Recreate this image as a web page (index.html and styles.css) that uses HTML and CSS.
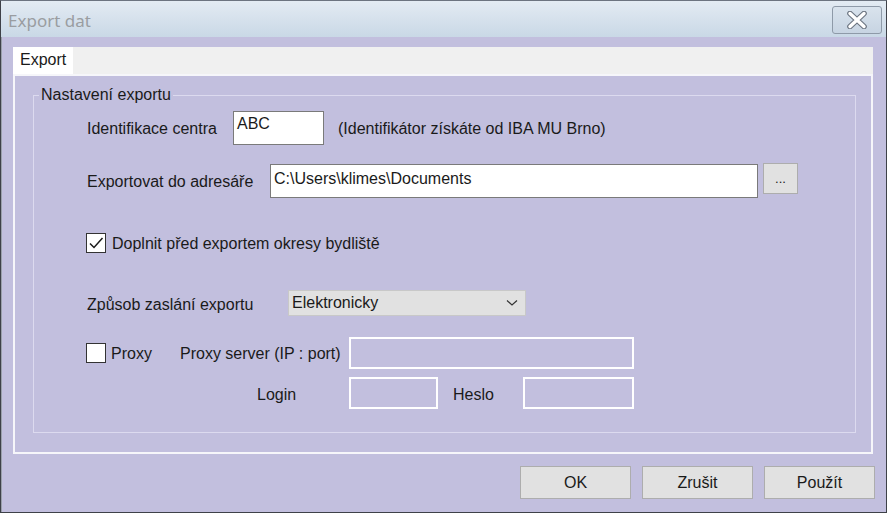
FILE: index.html
```html
<!DOCTYPE html>
<html lang="cs">
<head>
<meta charset="utf-8">
<title>Export dat</title>
<link rel="stylesheet" href="styles.css">
</head>
<body>
<div class="window">
  <div class="titlebar">
    <span class="title">Export dat</span>
    <button class="close" type="button" aria-label="Zavřít">
      <svg width="20" height="18" viewBox="0 0 20 18">
        <path d="M3 2.5 L17 15.5 M17 2.5 L3 15.5" stroke="#6b7480" stroke-width="5.6" stroke-linecap="round" fill="none"/>
        <path d="M3 2.5 L17 15.5 M17 2.5 L3 15.5" stroke="#ffffff" stroke-width="3.4" stroke-linecap="round" fill="none"/>
      </svg>
    </button>
  </div>
  <div class="client">
    <div class="tabstrip">
      <div class="tab">Export</div>
    </div>
    <div class="panel">
      <fieldset class="group">
        <legend>Nastavení exportu</legend>
        <div class="rows">
          <div class="row r1">
            <span class="lbl txt w146">Identifikace centra</span>
            <div class="field f-id">ABC</div>
            <span class="note txt">(Identifikátor získáte od IBA MU Brno)</span>
          </div>
          <div class="row r2">
            <span class="lbl txt w183">Exportovat do adresáře</span>
            <div class="field f-path">C:\Users\klimes\Documents</div>
            <button class="btn dots" type="button">...</button>
          </div>
          <div class="row r3">
            <span class="cb checked">
              <svg width="18" height="18" viewBox="0 0 18 18"><path d="M3 9.5 L7 13.5 L15.5 4" stroke="#1a1a1a" stroke-width="1.5" fill="none"/></svg>
            </span>
            <span class="cbtext txt">Doplnit před exportem okresy bydliště</span>
          </div>
          <div class="row r4">
            <span class="lbl txt2 w201">Způsob zaslání exportu</span>
            <div class="select">
              <span>Elektronicky</span>
              <svg width="12" height="8" viewBox="0 0 12 8"><path d="M1 1.5 L6 6 L11 1.5" stroke="#333" stroke-width="1.2" fill="none"/></svg>
            </div>
          </div>
          <div class="row r5">
            <span class="cbwrap">
              <span class="cb"></span>
              <span class="cbtext2 txt">Proxy</span>
            </span>
            <span class="lbl txt w169">Proxy server (IP : port)</span>
            <div class="dfield w285"></div>
          </div>
          <div class="row r6">
            <span class="lbl txt2 login">Login</span>
            <div class="dfield w89"></div>
            <span class="lbl txt2 heslo">Heslo</span>
            <div class="dfield w111"></div>
          </div>
        </div>
      </fieldset>
    </div>
    <div class="buttons">
      <button class="btn big" type="button">OK</button>
      <button class="btn big" type="button">Zrušit</button>
      <button class="btn big" type="button">Použít</button>
    </div>
  </div>
</div>
</body>
</html>
```

FILE: styles.css
```css
html, body {
  margin: 0;
  padding: 0;
  background: #c2bfde;
}
body {
  font-family: "Liberation Sans", Arial, sans-serif;
  font-size: 16px;
  color: #1a1a1a;
}
.window {
  width: 887px;
  height: 513px;
  box-sizing: border-box;
  border: 1px solid #3e4148;
  border-top-color: #6c7480;
  background: #c2bfde;
  display: flex;
  flex-direction: column;
  box-shadow: inset 1px 0 0 #9aa0ab;
}
.titlebar {
  height: 36px;
  flex: none;
  background: linear-gradient(#e3ebf3, #c9d8e6);
  display: flex;
  align-items: center;
  justify-content: space-between;
  padding: 0 4px 0 7px;
}
.title {
  font-family: "Noto Sans", sans-serif;
  font-size: 17px;
  color: #9a9da1;
  margin-top: 2px;
}
.close {
  width: 50px;
  height: 28px;
  margin-top: 1px;
  border: 1px solid #8e9aa8;
  border-radius: 3px;
  background: linear-gradient(#d9e3ed, #c7d4e2);
  padding: 0;
  display: flex;
  align-items: center;
  justify-content: center;
}
.client {
  flex: 1;
  display: flex;
  flex-direction: column;
  padding: 10px 12px 0 12px;
}
.tabstrip {
  height: 27px;
  width: 860px;
  background: #f0f0f0;
  display: flex;
}
.tab {
  width: 60px;
  height: 27px;
  box-sizing: border-box;
  background: #ffffff;
  padding: 4px 0 0 7px;
  line-height: 18px;
}
.panel {
  width: 860px;
  height: 380px;
  box-sizing: border-box;
  border: 2px solid #f6f6fa;
  padding: 10px 15px 0 18px;
}
.group {
  margin: 0;
  padding: 0;
  height: 347px;
  box-sizing: border-box;
  border: 1px solid #dcdaef;
  min-width: 0;
}
.group legend {
  margin-left: 5px;
  padding: 0 2px;
  line-height: 18px;
}
.rows {
  padding-left: 53px;
}
.row {
  display: flex;
  align-items: center;
}
.txt { padding-top: 2px; }
.txt2 { padding-top: 4px; }
.r1 { margin-top: 7px; height: 34px; }
.r2 { margin-top: 18px; height: 35px; align-items: flex-start; }
.r2 .lbl { align-self: center; }
.r3 { margin-top: 35px; height: 20px; }
.r4 { margin-top: 37px; height: 26px; }
.r5 { margin-top: 21px; height: 32px; }
.r6 { margin-top: 8px; height: 32px; }
.lbl { flex: none; }
.w146 { width: 146px; }
.w183 { width: 183px; }
.w201 { width: 201px; }
.w169 { width: 169px; }
.field {
  background: #ffffff;
  border: 1px solid #7a7a7a;
  box-sizing: border-box;
  height: 34px;
  padding: 3px 3px;
  line-height: 18px;
}
.f-id { width: 91px; }
.f-path { width: 488px; margin-top: 1px; padding-top: 5px; }
.note { margin-left: 14px; }
.btn {
  font-family: "Liberation Sans", Arial, sans-serif;
  font-size: 16px;
  color: #1a1a1a;
  background: #e1e1e1;
  border: 1px solid #adadad;
  padding: 0;
}
.dots {
  width: 35px;
  height: 31px;
  margin-left: 5px;
  font-size: 13px;
  line-height: 10px;
}
.cb {
  width: 20px;
  height: 20px;
  box-sizing: border-box;
  border: 1px solid #333333;
  background: #ffffff;
  margin-left: -1px;
  display: flex;
  align-items: center;
  justify-content: center;
  flex: none;
}
.cbtext { margin-left: 6px; }
.cbwrap {
  width: 93px;
  display: flex;
  align-items: center;
  flex: none;
}
.cbtext2 { margin-left: 5px; }
.select {
  width: 238px;
  height: 26px;
  box-sizing: border-box;
  background: #e1e1e1;
  border: 1px solid #c8c8c8;
  display: flex;
  align-items: center;
  justify-content: space-between;
  padding: 0 7px 0 3px;
}
.dfield {
  height: 32px;
  box-sizing: border-box;
  border: 2px solid #ffffff;
  flex: none;
}
.w285 { width: 285px; }
.w89 { width: 89px; }
.w111 { width: 111px; }
.login { margin-left: 170px; width: 92px; }
.heslo { margin-left: 15px; width: 70px; }
.buttons {
  display: flex;
  justify-content: flex-end;
  gap: 11px;
  margin-top: 12px;
  width: 862px;
}
.big {
  width: 111px;
  height: 33px;
}
```
